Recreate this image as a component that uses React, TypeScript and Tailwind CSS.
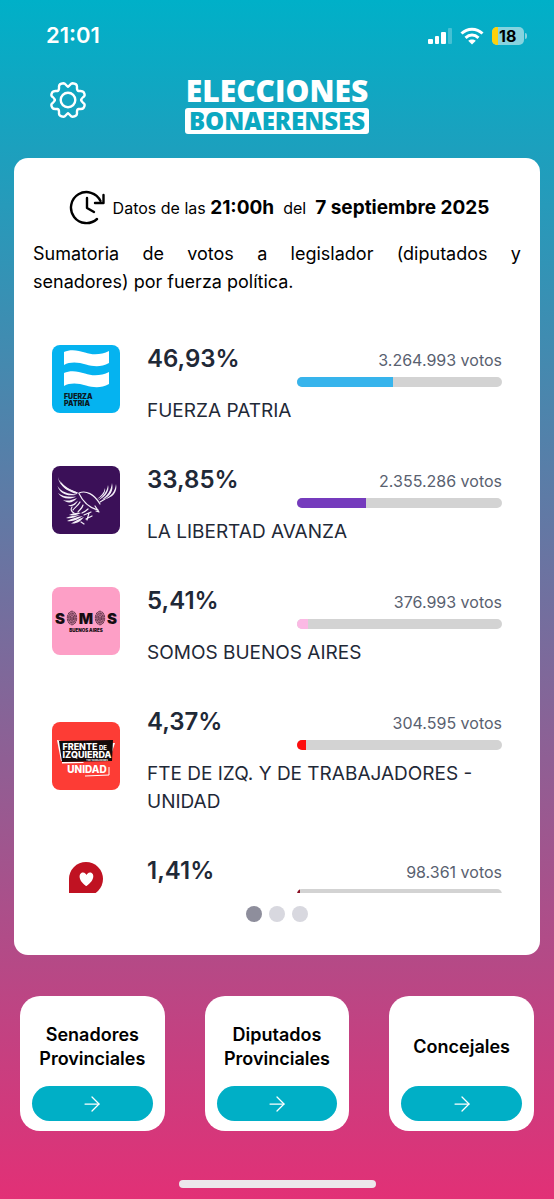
import { ArrowRight } from 'lucide-react'
import type { ReactNode } from 'react'

type Party = {
  name: string
  percent: string
  votes: string
  share: number
  color: string
  logo: ReactNode
}

function FuerzaPatriaLogo() {
  return (
    <svg viewBox="0 0 68 68" className="size-full" aria-hidden="true">
      <rect width="68" height="68" fill="#05b3f0" />
      <path d="M12 7C18 4 26 5 33 7.500C41 10.500 50 9.500 57 6V18C49 22.500 41 21.500 34 19.500C26 17 18 16.500 12 20Z" fill="#fff" />
      <path d="M12 28C18 25 26 26 33 28.500C41 31.500 50 30.500 57 27V39C49 43.500 41 42.500 34 40.500C26 38 18 37.500 12 41Z" fill="#fff" />
      <g fill="#0b1a24" fontFamily="Inter, sans-serif" fontWeight="900" fontSize="7">
        <text x="12" y="54">FUERZA</text>
        <text x="12" y="61">PATRIA</text>
      </g>
    </svg>
  )
}

function LibertadAvanzaLogo() {
  return (
    <svg viewBox="0 0 68 68" className="size-full" aria-hidden="true">
      <rect width="68" height="68" fill="#3b1058" />
      <g fill="#f3eef7">
        {/* left wing */}
        <path d="M6 11C8 19 15 23 26 26.500C17 25.500 7 21 6 11Z" />
        <path d="M8 15C13 21 18 23.500 26 26.500L25 28C17 26 10 22 8 15Z" />
        <path d="M5.500 20C9 26 16 28 25 28.500C16 31 8 28 5.500 20Z" />
        <path d="M6 27C11 31 17 31 24 30.500C18 34 10 33 6 27Z" />
        <path d="M11 34C16 35.500 20 34 25 32C21 37 16 38 11 34Z" />
        <path d="M16 39.500C20 39.500 23 37 26 34.500C24 39 20 41.500 16 39.500Z" />
        {/* right wing */}
        <path d="M56 19C58 25 53 31 46 34.500C51 30 55 26 56 19Z" />
        <path d="M60 17C62 25 58 31 50 33.500C55 30 59 25 60 17Z" />
        <path d="M64 18C66 26 60 32 53 33C59 30 63 26 64 18Z" />
        <path d="M53 22C54 27 50 31 45 33C49 30 52 27 53 22Z" />
        {/* tail */}
        <path d="M14 52C18 50 22 49.500 28 49C23 51.500 18 53 14 52Z" />
        <path d="M15 55C20 52.500 25 51 31 50C26 53.500 21 56 15 55Z" />
        <path d="M19 57.500C23 55 27 53 32 51C29 55 25 58 19 57.500Z" />
        <path d="M17 49C21 47 25 46.500 29 47C25 49 21 50 17 49Z" />
      </g>
      <g fill="none" stroke="#f3eef7" strokeWidth="1.200" strokeLinecap="round" strokeLinejoin="round">
        <path d="M27 27C34 24 42 28 48 38" />
        <path d="M27 27.500C31 36 38 42 46 44" />
        <path d="M43 40L47 46L44 45" />
        <path d="M48 36L53 33" />
        <path d="M20 41C18 44 20 46 22 47" />
        <path d="M28 36C26 40 22 42 21 44" />
        <path d="M31 39C30 43 27 44 26 46" />
        <path d="M36 43C34 45 32 46 30 47" />
        <path d="M32 49L39 46M34 53L40 50M37 47L35 54M29 56L32 58" />
      </g>
    </svg>
  )
}

function Fingerprint({ x }: { x: number }) {
  return (
    <g fill="none" stroke="#4a2436" strokeWidth="0.800" transform={`translate(${x} 31)`}>
      <ellipse rx="4.700" ry="6.800" fill="#b8708f" strokeDasharray="3 0.600" />
      <ellipse rx="3.200" ry="4.800" strokeDasharray="2.500 0.600" />
      <ellipse rx="1.700" ry="3" strokeDasharray="2 0.500" />
      <path d="M0 -1V2" />
    </g>
  )
}

function SomosLogo() {
  return (
    <svg viewBox="0 0 68 68" className="size-full" aria-hidden="true">
      <rect width="68" height="68" fill="#fd9fc6" />
      <g fill="#160d12" fontFamily="Inter, sans-serif" fontWeight="900" textAnchor="middle">
        <text x="8" y="37" fontSize="15">S</text>
        <text x="34" y="37" fontSize="15">M</text>
        <text x="60" y="37" fontSize="15">S</text>
        <text x="34" y="45" fontSize="4.500">BUENOS AIRES</text>
      </g>
      <Fingerprint x={20} />
      <Fingerprint x={48} />
    </svg>
  )
}

function FrenteIzquierdaLogo() {
  return (
    <svg viewBox="0 0 68 68" className="size-full" aria-hidden="true">
      <rect width="68" height="68" fill="#fd3c35" />
      <path d="M5 18L9 19L11 39L9 39Z" fill="#fff" />
      <path d="M58 21H63L60 30Z" fill="#fff" />
      <path d="M7 19L61 18L60 39L10 40Z" fill="#140b0b" />
      <path d="M10 40H32L31 41L10 41.500Z" fill="#fff" />
      <g fill="#fff" fontFamily="Inter, sans-serif" fontWeight="800" textAnchor="middle">
        <text x="28" y="27.500" fontSize="9">FRENTE</text>
        <text x="51" y="27.500" fontSize="6">DE</text>
        <text x="35" y="36" fontSize="9">IZQUIERDA</text>
        <text x="45" y="39" fontSize="2">Y DE TRABAJADORES</text>
        <text x="35" y="51" fontSize="10">UNIDAD</text>
      </g>
      <path d="M57 45V53L33 54" fill="none" stroke="#fff" strokeWidth="1" />
    </svg>
  )
}

function HeartLogo() {
  return (
    <svg viewBox="0 0 68 68" className="size-full" aria-hidden="true">
      <path d="M17 39V22A17 17 0 1 1 34 39Z" fill="#c01222" />
      <path d="M34 29C25 22.500 27 15.500 31 15.500C33 15.500 34 17 34.500 18C35 17 36 15.500 38 15.500C42 15.500 44 22.500 34.500 29Z" fill="#fff" />
    </svg>
  )
}

const parties: Party[] = [
  { name: 'FUERZA PATRIA', percent: '46,93%', votes: '3.264.993 votos', share: 46.93, color: '#37b4ec', logo: <FuerzaPatriaLogo /> },
  { name: 'LA LIBERTAD AVANZA', percent: '33,85%', votes: '2.355.286 votos', share: 33.85, color: '#753bbd', logo: <LibertadAvanzaLogo /> },
  { name: 'SOMOS BUENOS AIRES', percent: '5,41%', votes: '376.993 votos', share: 5.41, color: '#fbb9e4', logo: <SomosLogo /> },
  { name: 'FTE DE IZQ. Y DE TRABAJADORES - UNIDAD', percent: '4,37%', votes: '304.595 votos', share: 4.37, color: '#fd0d0d', logo: <FrenteIzquierdaLogo /> },
  { name: '', percent: '1,41%', votes: '98.361 votos', share: 1.41, color: '#8c1024', logo: <HeartLogo /> },
]

const categories = ['Senadores Provinciales', 'Diputados Provinciales', 'Concejales']

function StatusBar() {
  return (
    <div className="flex h-[71px] items-center justify-between pr-[27px] pl-[46px] text-white">
      <span className="text-[22px] font-semibold">21:01</span>
      <div className="flex items-center gap-2">
        <svg viewBox="0 0 25 18" className="h-[18px] w-[25px]" fill="currentColor" aria-hidden="true">
          <rect x="1" y="12" width="5" height="5" rx="1" />
          <rect x="8" y="9" width="4" height="8" rx="1" />
          <rect x="14" y="5" width="5" height="12" rx="1" />
          <rect x="21" y="1" width="4" height="16" rx="1" opacity="0.250" />
        </svg>
        <svg viewBox="0 0 24 18" className="h-[18px] w-6" aria-hidden="true">
          <g fill="none" stroke="currentColor" strokeWidth="3">
            <path d="M1.500 6.500C7.500 0.800 16.500 0.800 22.500 6.500" />
            <path d="M5.500 10.800C9.500 7.200 14.500 7.200 18.500 10.800" />
          </g>
          <path d="M12 17.500L8.200 13.800C10.300 11.900 13.700 11.900 15.800 13.800Z" fill="currentColor" />
        </svg>
        <div className="flex items-center gap-px">
          <div className="flex h-[18px] w-8 overflow-hidden rounded-[5px] bg-[#86d3df]">
            <span className="w-[6px] bg-[#fdd10a]" />
            <span className="pl-px text-base leading-[18px] font-bold text-black">18</span>
          </div>
          <span className="h-[6px] w-[2px] rounded-r-full bg-[#86d3df]" />
        </div>
      </div>
    </div>
  )
}

function GearIcon() {
  const quarter =
    'M0 -13.500C1.500 -13.500 2.500 -16.700 4.500 -16.700C7 -16.500 9 -15.500 9 -13.500C9 -11.500 8.500 -9.500 10.500 -9C12.500 -8.800 14.500 -9.500 15.500 -8C16.500 -6.500 17 -4.500 16 -3.500C14.500 -2.200 13.200 -1.500 13.200 0'

  return (
    <svg viewBox="-18 -18 36 36" className="size-9" fill="none" stroke="currentColor" strokeWidth="2.400" strokeLinejoin="round" strokeLinecap="round" aria-hidden="true">
      <circle r="7.300" />
      <path d={quarter} />
      <path d={quarter} transform="scale(-1 1)" />
      <path d={quarter} transform="scale(1 -1)" />
      <path d={quarter} transform="scale(-1 -1)" />
    </svg>
  )
}

function UpdatedIcon() {
  return (
    <svg viewBox="0 0 36 36" className="size-9 shrink-0" fill="none" stroke="#000" strokeWidth="2.400" strokeLinecap="round" strokeLinejoin="round" aria-hidden="true">
      <path d="M28 29A15.500 15.500 0 1 1 31.500 11" />
      <path d="M34.500 5V13H26" />
      <path d="M18 8V18L25 22" />
    </svg>
  )
}

function PartyRow({ party }: { party: Party }) {
  return (
    <li className="flex items-center gap-[27px] pt-[15px] pb-[14px]">
      <div className="size-[68px] shrink-0 overflow-hidden rounded-lg">{party.logo}</div>
      <div className="min-w-0 flex-1 text-[#1f2937]">
        <div className="flex h-16 justify-between pt-2">
          <strong className="text-2xl leading-9 font-semibold">{party.percent}</strong>
          <div className="w-[205px] pt-[7px]">
            <p className="text-right text-base text-[#596170]">{party.votes}</p>
            <div
              role="progressbar"
              aria-label={`${party.percent} de los votos`}
              aria-valuenow={party.share}
              className="mt-[5px] h-[10px] overflow-hidden rounded-full bg-[#d3d3d3]"
            >
              <div className="h-full" style={{ width: `${party.share}%`, backgroundColor: party.color }} />
            </div>
          </div>
        </div>
        <p className="min-h-7 text-[19px] leading-7">{party.name}</p>
      </div>
    </li>
  )
}

export default function App() {
  return (
    <main className="flex min-h-screen flex-col bg-linear-to-b/srgb from-[#00b0c8] to-[#e23076] font-['Inter',sans-serif] text-black">
      <StatusBar />

      {/* Header */}
      <header className="grid grid-cols-[1fr_auto_1fr] items-start pt-2">
        <button type="button" aria-label="Configuración" className="ml-[50px] w-9 pt-[3px] text-white">
          <GearIcon />
        </button>
        <h1 className="flex flex-col items-center font-['Open_Sans',sans-serif] font-extrabold">
          <span className="text-[30px] leading-6 text-white">ELECCIONES</span>
          <span className="mt-[5px] rounded-[3px] bg-white px-1 text-2xl leading-[26px] text-[#0ba8c1]">BONAERENSES</span>
        </h1>
      </header>

      {/* Results */}
      <section className="mx-[14px] mt-6 rounded-[14px] bg-white px-[19px] pt-8 pb-[33px]">
        <div className="flex items-center justify-center gap-2 pl-1 text-base leading-9">
          <UpdatedIcon />
          <p>
            Datos de las <strong className="text-[19px]">21:00h</strong>&nbsp; del &nbsp;
            <strong className="text-[19px]">7 septiembre 2025</strong>
          </p>
        </div>
        <p className="mt-[14px] text-justify text-lg leading-7">
          Sumatoria de votos a legislador (diputados y senadores)&nbsp;por fuerza política.
        </p>

        <ul className="mt-[22px] h-[575px] overflow-y-auto px-[19px] [scrollbar-width:none]">
          {parties.map((party) => (
            <PartyRow key={party.percent} party={party} />
          ))}
        </ul>

        <div className="mt-[13px] flex justify-center gap-[7px]">
          <button type="button" aria-label="Página 1" className="size-4 rounded-full bg-[#8e8e9c]" />
          <button type="button" aria-label="Página 2" className="size-4 rounded-full bg-[#d8d8df]" />
          <button type="button" aria-label="Página 3" className="size-4 rounded-full bg-[#d8d8df]" />
        </div>
      </section>

      {/* Categories */}
      <nav className="mx-5 mt-[41px] grid grid-cols-3 gap-10">
        {categories.map((category) => (
          <div key={category} className="flex flex-col rounded-[20px] bg-white px-3 pt-3 pb-[10px]">
            <h2 className="flex h-[78px] items-center justify-center text-center text-lg leading-6 font-semibold">
              {category}
            </h2>
            <button
              type="button"
              aria-label={category}
              className="flex h-[35px] items-center justify-center rounded-full bg-[#00afc6] text-white"
            >
              <ArrowRight className="size-6" strokeWidth={1.25} />
            </button>
          </div>
        ))}
      </nav>

      <div className="mx-auto mt-auto mb-[11px] h-2 w-[197px] rounded-full bg-[#ece7ec]" />
    </main>
  )
}
